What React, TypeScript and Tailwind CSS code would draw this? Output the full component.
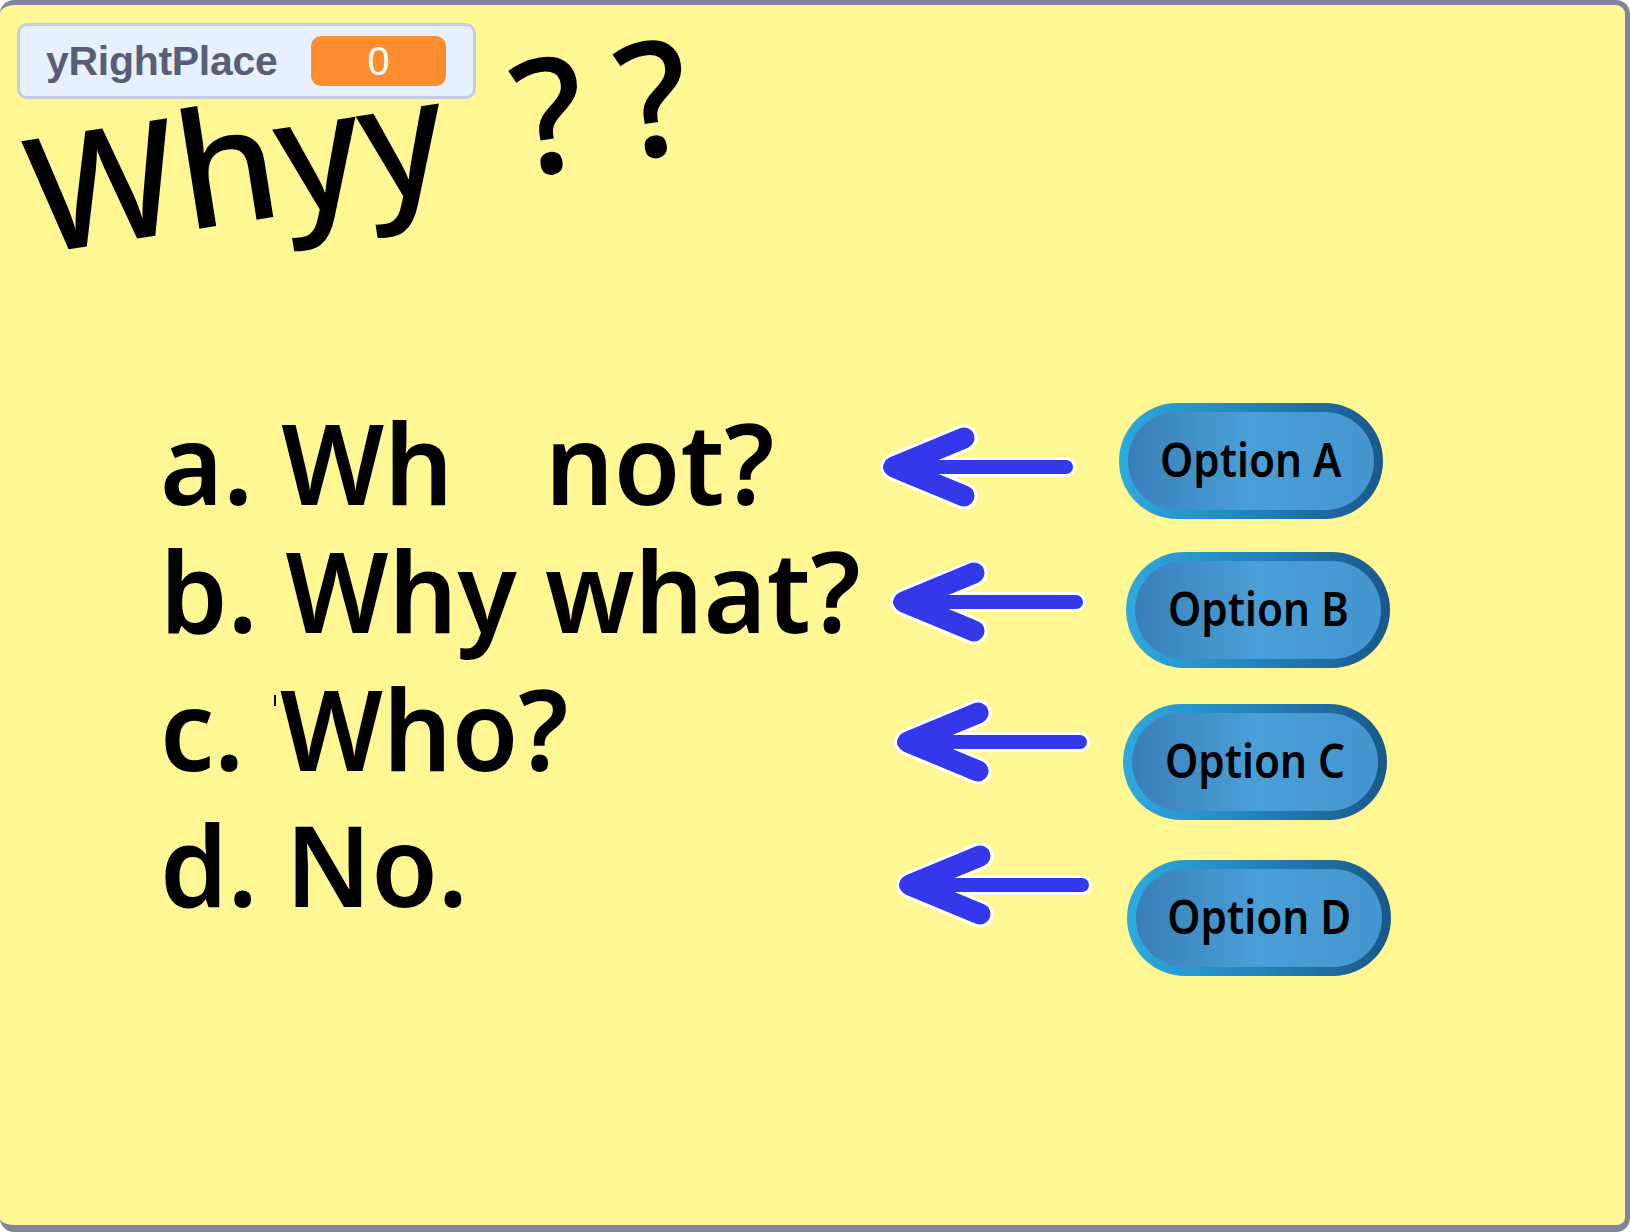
import React from "react";

function Arrow({ left, top }: { left: number; top: number }) {
  return (
    <svg
      className="absolute"
      style={{ left, top }}
      width={200}
      height={90}
      viewBox="0 0 200 90"
    >
      <g fill="none" strokeLinecap="round" strokeLinejoin="round" stroke="#ffffff">
        <path d="M14 45 L84 16 M14 45 L84 74" strokeWidth={27} />
        <path d="M10 45 L186 45" strokeWidth={20} />
      </g>
      <g fill="none" strokeLinecap="round" strokeLinejoin="round" stroke="#3339ea">
        <path d="M14 45 L84 16 M14 45 L84 74" strokeWidth={21} />
        <path d="M10 45 L186 45" strokeWidth={14} />
      </g>
    </svg>
  );
}

function OptionButton({ label, left, top }: { label: string; left: number; top: number }) {
  return (
    <div
      className="absolute w-[264px] h-[116px] rounded-full p-[9px] bg-linear-to-r from-[#2eaadf] via-[#2383ba] to-[#1a5789]"
      style={{ left, top }}
    >
      <div className="w-full h-full rounded-full bg-linear-to-r from-[#3a7eb9] via-[#4aa0d6] to-[#4595ce] flex items-center justify-center">
        <span
          className="inline-block scale-x-[0.9] text-black text-[47px] leading-none font-semibold pb-[4px]"
          style={{ fontFamily: '"Noto Sans", sans-serif' }}
        >
          {label}
        </span>
      </div>
    </div>
  );
}

export default function App() {
  const lines = ["a.", "b.", "c.", "d."];
  return (
    <div className="w-[1630px] h-[1232px] bg-white overflow-hidden">
      <div className="relative w-[1630px] h-[1232px] bg-[#fff694] border-t-[5px] border-r-[5px] border-b-[7px] border-l-0 border-[#80869a] rounded-[14px] overflow-hidden">
        {/* variable monitor */}
        <div
          className="absolute left-[17px] top-[18px] w-[459px] h-[76px] rounded-[10px] border-[3px] border-[#c5cee0] bg-[#e6f0ff] flex items-center justify-between pl-[26px] pr-[27px]"
          style={{ fontFamily: '"Liberation Sans", Arial, sans-serif' }}
        >
          <span className="text-[41px] font-bold text-[#575e75] leading-none tracking-[-0.3px]">yRightPlace</span>
          <span className="w-[135px] h-[50px] rounded-[10px] bg-[#ff8c2e] text-white text-[40px] leading-none flex items-center justify-center">
            0
          </span>
        </div>

        {/* rotated title sprite */}
        <div
          className="absolute left-[24px] top-[54px] w-[690px] h-[162px] text-[160px] leading-none font-medium text-black whitespace-pre -rotate-[9deg]"
          style={{ fontFamily: '"Noto Sans", sans-serif' }}
        >
          Whyy<span className="inline-block w-[72px]" />?<span className="inline-block w-[34px]" />?
        </div>

        {/* answers */}
        <div
          className="absolute left-[160px] top-[390px] flex flex-col origin-left scale-x-[0.965] text-[112px] leading-[134px] font-semibold text-black whitespace-pre"
          style={{ fontFamily: '"Noto Sans", sans-serif' }}
        >
          <div className="h-[128px]">
            {lines[0]} Wh<span className="inline-block w-[66px]" /> not?
          </div>
          <div className="h-[138px]">{lines[1]} Why what?</div>
          <div className="h-[136px]">
            {lines[2]}<span className="inline-block w-[8px]" /> Who?
          </div>
          <div className="h-[134px]">{lines[3]} No.</div>
        </div>
        <div className="absolute left-[274px] top-[690px] w-[2px] h-[11px] bg-black" />

        <Arrow left={880} top={417} />
        <Arrow left={890} top={552} />
        <Arrow left={894} top={692} />
        <Arrow left={896} top={835} />

        <OptionButton label="Option A" left={1119} top={398} />
        <OptionButton label="Option B" left={1126} top={547} />
        <OptionButton label="Option C" left={1123} top={699} />
        <OptionButton label="Option D" left={1127} top={855} />
      </div>
    </div>
  );
}
